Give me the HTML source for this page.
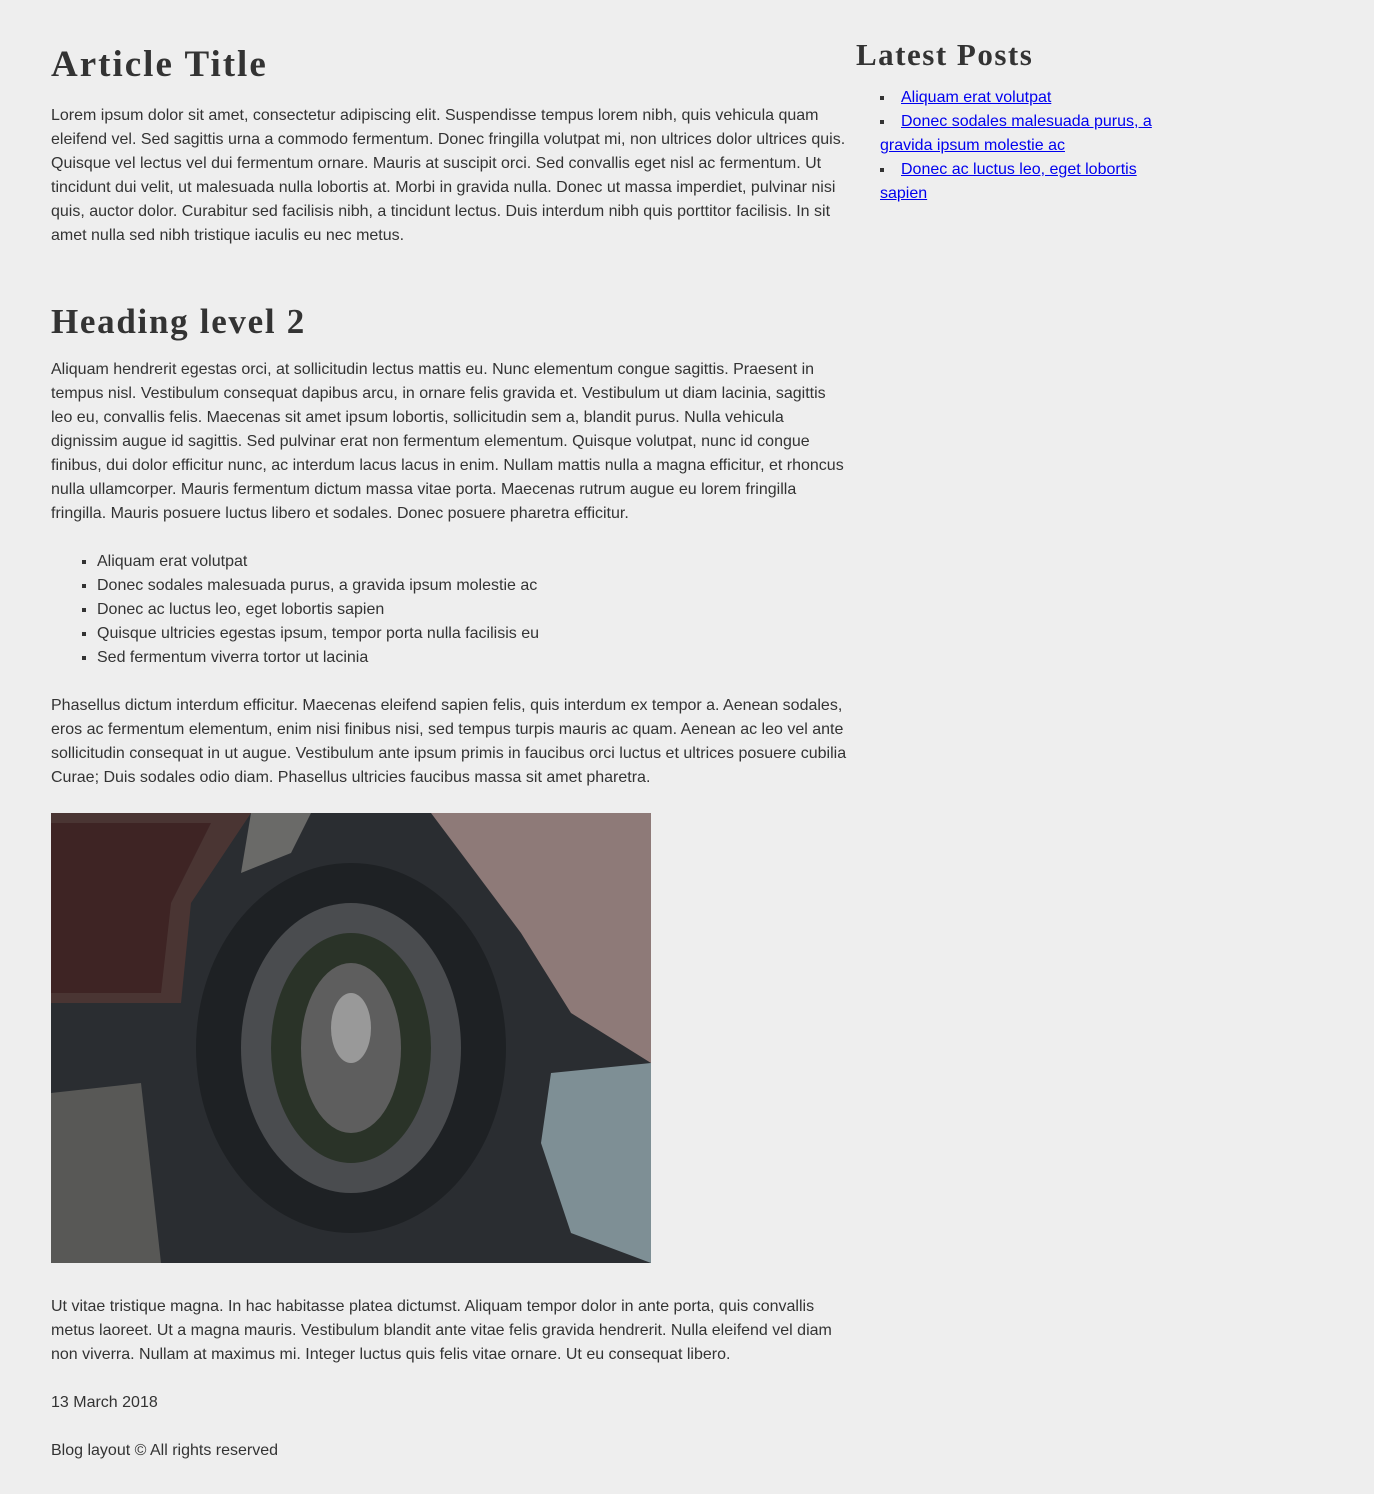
<!DOCTYPE html>
<html><head><meta charset="utf-8"><style>
html,body{margin:0;padding:0;background:#eeeeee;}
body{width:1374px;height:1494px;overflow:hidden;position:relative;font-family:"Liberation Sans",sans-serif;font-size:16px;line-height:24px;color:#333;}
.main{position:absolute;left:51px;top:2px;width:797px;}
.side{position:absolute;left:856px;top:2px;width:300px;}
h1,h2{font-family:"Liberation Serif",serif;font-weight:bold;color:#333;margin:0;}
h1{font-size:37px;line-height:44px;position:absolute;top:41px;letter-spacing:2px;}
h2{font-size:35px;line-height:44px;letter-spacing:1.7px;}
p{margin:0;}
ul{margin:0;list-style:square;}
a{color:#00e;}
</style></head><body>
<div class="main">
<h1>Article Title</h1>
<p style="position:absolute;top:102px;">Lorem ipsum dolor sit amet, consectetur adipiscing elit. Suspendisse tempus lorem nibh, quis vehicula quam eleifend vel. Sed sagittis urna a commodo fermentum. Donec fringilla volutpat mi, non ultrices dolor ultrices quis. Quisque vel lectus vel dui fermentum ornare. Mauris at suscipit orci. Sed convallis eget nisl ac fermentum. Ut tincidunt dui velit, ut malesuada nulla lobortis at. Morbi in gravida nulla. Donec ut massa imperdiet, pulvinar nisi quis, auctor dolor. Curabitur sed facilisis nibh, a tincidunt lectus. Duis interdum nibh quis porttitor facilisis. In sit amet nulla sed nibh tristique iaculis eu nec metus.</p>
<h2 style="position:absolute;top:298px;">Heading level 2</h2>
<p style="position:absolute;top:356px;">Aliquam hendrerit egestas orci, at sollicitudin lectus mattis eu. Nunc elementum congue sagittis. Praesent in tempus nisl. Vestibulum consequat dapibus arcu, in ornare felis gravida et. Vestibulum ut diam lacinia, sagittis leo eu, convallis felis. Maecenas sit amet ipsum lobortis, sollicitudin sem a, blandit purus. Nulla vehicula dignissim augue id sagittis. Sed pulvinar erat non fermentum elementum. Quisque volutpat, nunc id congue finibus, dui dolor efficitur nunc, ac interdum lacus lacus in enim. Nullam mattis nulla a magna efficitur, et rhoncus nulla ullamcorper. Mauris fermentum dictum massa vitae porta. Maecenas rutrum augue eu lorem fringilla fringilla. Mauris posuere luctus libero et sodales. Donec posuere pharetra efficitur.</p>
<ul style="position:absolute;top:548px;padding-left:46px;">
<li>Aliquam erat volutpat</li><li>Donec sodales malesuada purus, a gravida ipsum molestie ac</li><li>Donec ac luctus leo, eget lobortis sapien</li><li>Quisque ultricies egestas ipsum, tempor porta nulla facilisis eu</li><li>Sed fermentum viverra tortor ut lacinia</li></ul>
<p style="position:absolute;top:692px;">Phasellus dictum interdum efficitur. Maecenas eleifend sapien felis, quis interdum ex tempor a. Aenean sodales, eros ac fermentum elementum, enim nisi finibus nisi, sed tempus turpis mauris ac quam. Aenean ac leo vel ante sollicitudin consequat in ut augue. Vestibulum ante ipsum primis in faucibus orci luctus et ultrices posuere cubilia Curae; Duis sodales odio diam. Phasellus ultricies faucibus massa sit amet pharetra.</p>
<svg style="position:absolute;top:811px;left:0" width="600" height="450" viewBox="0 0 600 450">
<rect width="600" height="450" fill="#2a2d31"/>
<polygon points="0,0 200,0 140,90 130,190 0,190" fill="#4a3533"/>
<polygon points="0,10 160,10 120,90 110,180 0,180" fill="#3e2424"/>
<polygon points="380,0 600,0 600,250 520,200 470,120" fill="#8e7a78"/>
<polygon points="500,260 600,250 600,450 520,420 490,330" fill="#7e8f95"/>
<polygon points="0,280 90,270 110,450 0,450" fill="#585856"/>
<polygon points="200,0 260,0 240,40 190,60" fill="#6a6a68"/>
<ellipse cx="300" cy="235" rx="155" ry="185" fill="#1e2124"/>
<ellipse cx="300" cy="235" rx="110" ry="145" fill="#4a4c4f"/>
<ellipse cx="300" cy="235" rx="80" ry="115" fill="#2a3328"/>
<ellipse cx="300" cy="235" rx="50" ry="85" fill="#5e5e5e"/>
<ellipse cx="300" cy="215" rx="20" ry="35" fill="#999"/>
</svg>
<p style="position:absolute;top:1293px;">Ut vitae tristique magna. In hac habitasse platea dictumst. Aliquam tempor dolor in ante porta, quis convallis metus laoreet. Ut a magna mauris. Vestibulum blandit ante vitae felis gravida hendrerit. Nulla eleifend vel diam non viverra. Nullam at maximus mi. Integer luctus quis felis vitae ornare. Ut eu consequat libero.</p>
<p style="position:absolute;top:1389px;">13 March 2018</p>
<p style="position:absolute;top:1437px;">Blog layout © All rights reserved</p>
</div>
<div class="side">
<h2 style="position:absolute;top:31px;font-size:31px;white-space:nowrap;letter-spacing:1.5px;">Latest Posts</h2>
<ul style="position:absolute;top:84px;padding-left:24px;list-style-position:inside;width:276px;">
<li><a href="#">Aliquam erat volutpat</a></li>
<li><a href="#">Donec sodales malesuada purus, a gravida ipsum molestie ac</a></li>
<li><a href="#">Donec ac luctus leo, eget lobortis sapien</a></li>
</ul>
</div>
</body></html>
